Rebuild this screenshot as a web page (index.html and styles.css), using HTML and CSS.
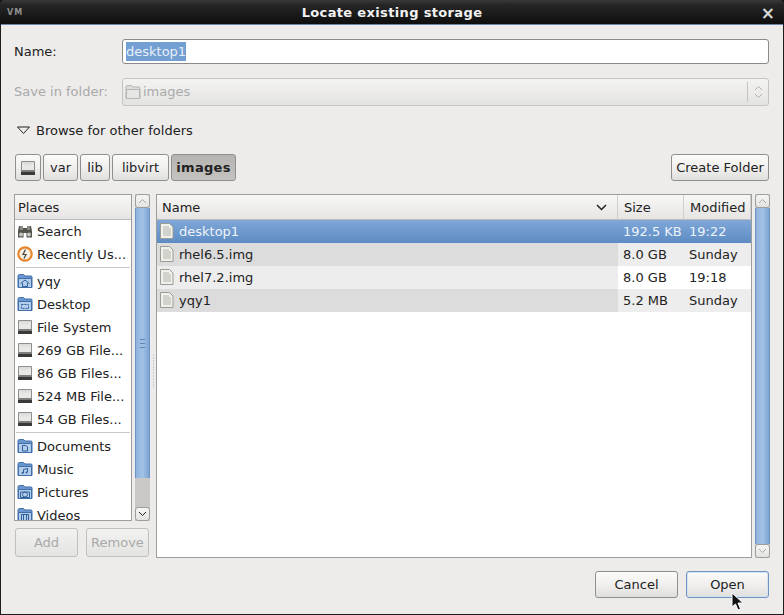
FILE: index.html
```html
<!DOCTYPE html>
<html lang="en">
<head>
    <meta charset="UTF-8">
    <title>Locate existing storage</title>
    <link rel="stylesheet" href="styles.css">
</head>
<body>
    <svg class="defs" width="0" height="0">
        <defs>
            <linearGradient id="drive-face" x1="0" y1="0" x2="0" y2="1">
                <stop offset="0" stop-color="#d8d8d6"/>
                <stop offset="1" stop-color="#f4f4f2"/>
            </linearGradient>
        </defs>
        <symbol id="ico-drive" viewBox="0 0 16 16">
            <path d="M1.500 1.500h13v9h-13z" fill="url(#drive-face)" stroke="#8e8e8c"/>
            <path d="M2 3l6 4.500L14 3v7H2z" fill="#e8e8e6"/>
            <path d="M1 10.500h14v4.500H1z" fill="#3a3a38"/>
            <path d="M1 10.500h14v1.200H1z" fill="#9a9a98"/>
        </symbol>
        <symbol id="ico-folder" viewBox="0 0 16 16">
            <path d="M1 3q0-1.500 1.500-1.500h4L8 3h6q1 0 1 1v10.500H1z" fill="#6a97cf" stroke="#3f6ea8"/>
            <path d="M1.500 5.500h13v9h-13z" fill="#b4cdea" stroke="#3f6ea8"/>
        </symbol>
        <symbol id="ico-file" viewBox="0 0 16 18">
            <path d="M1.500 1.500h9l3.500 3.500v11.500h-12.500z" fill="#f1f1ec" stroke="#9b9b96"/>
            <path d="M4 5h6M4 7h8M4 9h8M4 11h8M4 13h8" stroke="#b4b4ae"/>
        </symbol>
    </svg>

    <div class="window">
        <div class="titlebar">
            <span class="wm-icon">VM</span>
            <span class="title">Locate existing storage</span>
            <span class="close">&#215;</span>
        </div>

        <div class="content">
            <div class="form-row name-row">
                <label class="row-label">Name:</label>
                <div class="entry"><span class="selected-text">desktop1</span></div>
            </div>

            <div class="form-row save-row">
                <label class="row-label disabled">Save in folder:</label>
                <div class="combo">
                    <svg class="combo-folder" width="16" height="16" viewBox="0 0 16 16">
                        <path d="M1 3q0-1.500 1.500-1.500h4L8 3h6q1 0 1 1v10.500H1z" fill="#dcdcda" stroke="#b5b5b3"/>
                        <path d="M1.500 5.500h13v9h-13z" fill="#e6e6e4" stroke="#b5b5b3"/>
                    </svg>
                    <span class="combo-text">images</span>
                    <span class="combo-arrows">
                        <svg width="9" height="14" viewBox="0 0 9 14">
                            <path d="M1 5l3.500-3.500L8 5M1 9l3.500 3.500L8 9" fill="none" stroke="#b0b0ae"/>
                        </svg>
                    </span>
                </div>
            </div>

            <div class="expander">
                <svg width="15" height="9" viewBox="0 0 15 9">
                    <path d="M1.500 1h12L7.500 7.500z" fill="none" stroke="#222"/>
                </svg>
                <span>Browse for other folders</span>
            </div>

            <div class="path-row">
                <div class="path-bar">
                    <button class="btn path-btn icon-btn"><svg width="16" height="16"><use href="#ico-drive"/></svg></button>
                    <button class="btn path-btn var-btn">var</button>
                    <button class="btn path-btn lib-btn">lib</button>
                    <button class="btn path-btn libvirt-btn">libvirt</button>
                    <button class="btn path-btn active">images</button>
                </div>
                <button class="btn create-btn">Create Folder</button>
            </div>

            <div class="browser">
                <div class="places-side">
                    <div class="places-top">
                        <div class="places">
                            <div class="list-header places-header">Places</div>
                            <div class="place">
                                <svg width="16" height="16" viewBox="0 0 16 16">
                                    <path d="M1 8l1-5h4v2h4V3h4l1 5v6.500h-5.500V10h-3v4.500H1z" fill="#55554f"/>
                                    <path d="M3 3h3v4H3zM10 3h3v4h-3z" fill="#8b8b83"/>
                                    <circle cx="4" cy="11.500" r="2" fill="#c5c5bd"/>
                                    <circle cx="12" cy="11.500" r="2" fill="#c5c5bd"/>
                                </svg>
                                <span>Search</span>
                            </div>
                            <div class="place">
                                <svg width="16" height="16" viewBox="0 0 16 16">
                                    <circle cx="8" cy="8" r="6.700" fill="#f6efe2" stroke="#e8842a" stroke-width="2.200"/>
                                    <path d="M8.500 3.500L6 8.500h3L7 12.500" fill="none" stroke="#444" stroke-width="1.200"/>
                                </svg>
                                <span>Recently Us...</span>
                            </div>
                            <div class="sep"></div>
                            <div class="place"><svg width="16" height="16" viewBox="0 0 16 16"><use href="#ico-folder"/><path d="M3.500 10.500L8 7l4.500 3.500M5.500 10v3.500h5V10" fill="none" stroke="#2f5f9c"/></svg><span>yqy</span></div>
                            <div class="place"><svg width="16" height="16" viewBox="0 0 16 16"><use href="#ico-folder"/><path d="M4.500 8.500h7v4h-7z" fill="none" stroke="#2f5f9c" stroke-dasharray="2 1"/></svg><span>Desktop</span></div>
                            <div class="place"><svg width="16" height="16"><use href="#ico-drive"/></svg><span>File System</span></div>
                            <div class="place"><svg width="16" height="16"><use href="#ico-drive"/></svg><span>269 GB File...</span></div>
                            <div class="place"><svg width="16" height="16"><use href="#ico-drive"/></svg><span>86 GB Files...</span></div>
                            <div class="place"><svg width="16" height="16"><use href="#ico-drive"/></svg><span>524 MB File...</span></div>
                            <div class="place"><svg width="16" height="16"><use href="#ico-drive"/></svg><span>54 GB Files...</span></div>
                            <div class="sep"></div>
                            <div class="place"><svg width="16" height="16" viewBox="0 0 16 16"><use href="#ico-folder"/><path d="M5.500 7.500h3.500l1.500 1.500v4h-5z" fill="none" stroke="#2f5f9c"/></svg><span>Documents</span></div>
                            <div class="place"><svg width="16" height="16" viewBox="0 0 16 16"><use href="#ico-folder"/><path d="M6.500 12V8.500l4-1V11" fill="none" stroke="#2f5f9c"/><circle cx="5.500" cy="12" r="1" fill="#2f5f9c"/><circle cx="9.500" cy="11.500" r="1" fill="#2f5f9c"/></svg><span>Music</span></div>
                            <div class="place"><svg width="16" height="16" viewBox="0 0 16 16"><use href="#ico-folder"/><circle cx="8" cy="10.500" r="2.500" fill="none" stroke="#2f5f9c"/><path d="M3.500 8h9v5.500h-9z" fill="none" stroke="#2f5f9c"/></svg><span>Pictures</span></div>
                            <div class="place"><svg width="16" height="16" viewBox="0 0 16 16"><use href="#ico-folder"/><path d="M4.500 7.500h7v6h-7zM6.500 7.500v6M9.500 7.500v6" fill="none" stroke="#2f5f9c"/></svg><span>Videos</span></div>
                        </div>
                        <div class="scrollbar places-scroll">
                            <div class="sb-btn"><svg width="9" height="6" viewBox="0 0 9 6"><path d="M1 5l3.500-3.500L8 5" fill="none" stroke="#aaa"/></svg></div>
                            <div class="sb-thumb"><span class="grip"></span></div>
                            <div class="sb-rest"></div>
                            <div class="sb-btn"><svg width="9" height="6" viewBox="0 0 9 6"><path d="M1 1l3.500 3.500L8 1" fill="none" stroke="#222"/></svg></div>
                        </div>
                    </div>
                    <div class="places-buttons">
                        <button class="btn disabled-btn add-btn">Add</button>
                        <button class="btn disabled-btn remove-btn">Remove</button>
                    </div>
                </div>

                <div class="pane-handle"></div>

                <div class="files-side">
                    <div class="files">
                        <div class="file-row file-header">
                            <div class="list-header col-name">
                                <span>Name</span>
                                <svg width="11" height="7" viewBox="0 0 11 7"><path d="M1 1l4.500 4.500L10 1" fill="none" stroke="#222" stroke-width="1.500"/></svg>
                            </div>
                            <div class="list-header col-size">Size</div>
                            <div class="list-header col-mod">Modified</div>
                        </div>
                        <div class="file-row selected">
                            <div class="cell col-name"><svg width="16" height="18"><use href="#ico-file"/></svg><span>desktop1</span></div>
                            <div class="cell col-size">192.5 KB</div>
                            <div class="cell col-mod">19:22</div>
                        </div>
                        <div class="file-row odd">
                            <div class="cell col-name"><svg width="16" height="18"><use href="#ico-file"/></svg><span>rhel6.5.img</span></div>
                            <div class="cell col-size">8.0 GB</div>
                            <div class="cell col-mod">Sunday</div>
                        </div>
                        <div class="file-row even">
                            <div class="cell col-name"><svg width="16" height="18"><use href="#ico-file"/></svg><span>rhel7.2.img</span></div>
                            <div class="cell col-size">8.0 GB</div>
                            <div class="cell col-mod">19:18</div>
                        </div>
                        <div class="file-row odd">
                            <div class="cell col-name"><svg width="16" height="18"><use href="#ico-file"/></svg><span>yqy1</span></div>
                            <div class="cell col-size">5.2 MB</div>
                            <div class="cell col-mod">Sunday</div>
                        </div>
                    </div>
                    <div class="scrollbar files-scroll">
                        <div class="sb-btn"><svg width="9" height="6" viewBox="0 0 9 6"><path d="M1 5l3.500-3.500L8 5" fill="none" stroke="#aaa"/></svg></div>
                        <div class="sb-thumb"></div>
                        <div class="sb-btn"><svg width="9" height="6" viewBox="0 0 9 6"><path d="M1 1l3.500 3.500L8 1" fill="none" stroke="#aaa"/></svg></div>
                    </div>
                </div>
            </div>

            <div class="actions">
                <button class="btn action-btn">Cancel</button>
                <button class="btn action-btn default-btn">Open</button>
            </div>
        </div>

        <svg class="cursor" width="14" height="19" viewBox="0 0 14 19">
            <path d="M1 1v14l3.500-3 2.500 6 2.500-1-2.500-6h5z" fill="#111" stroke="#fff"/>
        </svg>
    </div>
</body>
</html>
```

FILE: styles.css
```css
/* General Styles */
html, body {
    margin: 0;
    padding: 0;
    width: 784px;
    height: 615px;
    overflow: hidden;
    background: #1a1a1a;
}

body {
    font-family: "DejaVu Sans", sans-serif;
    font-size: 13px;
    color: #222;
}

.defs {
    position: absolute;
}

svg {
    display: block;
    flex: none;
}

/* Window frame */
.window {
    position: relative;
    height: 615px;
    display: flex;
    flex-direction: column;
    box-sizing: border-box;
    padding: 0 1px 1px 1px;
    background: #1c1c1c;
    border-radius: 5px 5px 0 0;
}

.titlebar {
    height: 24px;
    flex: none;
    position: relative;
    display: flex;
    align-items: center;
    justify-content: center;
    margin: 0 -1px;
    background: linear-gradient(#3a3a3a, #262626 20%, #0e0e0e);
    border-radius: 5px 5px 0 0;
    color: #f2f2f2;
}

.title {
    font-weight: bold;
    font-size: 13px;
    letter-spacing: 0.35px;
}

.wm-icon {
    position: absolute;
    left: 7px;
    top: 9px;
    font-size: 8px;
    font-weight: bold;
    line-height: 8px;
    letter-spacing: 1px;
    color: #8f8f8f;
}

.close {
    position: absolute;
    right: 9px;
    top: 0;
    font-size: 17px;
    line-height: 27px;
    font-weight: bold;
    color: #d8d8d8;
}

.content {
    flex: 1;
    min-height: 0;
    display: flex;
    flex-direction: column;
    box-sizing: border-box;
    padding: 14px 14px 0 13px;
    background: #edeceb;
    border-top: 1px solid #6b86a8;
}

/* Form rows */
.form-row {
    display: flex;
    align-items: center;
}

.row-label {
    width: 108px;
    flex: none;
    line-height: 15px;
}

.row-label.disabled {
    color: #a9a9a9;
    padding-bottom: 1px;
}

.name-row {
    height: 25px;
}

.entry {
    flex: 1;
    height: 25px;
    box-sizing: border-box;
    padding: 2px 3px;
    background: #fff;
    border: 1px solid #8a8a88;
    border-radius: 3px;
    line-height: 19px;
}

.selected-text {
    display: inline-block;
    background: #739fd3;
    color: #e9f0f9;
}

.save-row {
    height: 28px;
    margin-top: 14px;
}

.combo {
    flex: 1;
    height: 28px;
    box-sizing: border-box;
    display: flex;
    align-items: center;
    gap: 2px;
    padding-left: 2px;
    border: 1px solid #c4c4c2;
    border-radius: 3px;
    background: linear-gradient(#f3f3f2, #ecebea 50%, #e3e3e1);
    color: #a9a9a9;
}

.combo-text {
    flex: 1;
    line-height: 15px;
    padding-bottom: 1px;
}

.combo-arrows {
    height: 20px;
    width: 21px;
    box-sizing: border-box;
    border-left: 1px solid #c4c4c2;
    display: flex;
    align-items: center;
    justify-content: center;
}

.expander {
    display: flex;
    align-items: center;
    gap: 5px;
    height: 20px;
    margin-top: 14px;
    padding-left: 2px;
}

/* Buttons */
.btn {
    font-family: inherit;
    font-size: 13px;
    color: #222;
    margin: 0;
    padding: 0;
    box-sizing: border-box;
    border: 1px solid #8f8f8d;
    border-radius: 3px;
    background: linear-gradient(#fbfbfa, #efeeed 55%, #dfdfdd);
    text-align: center;
}

.path-row {
    display: flex;
    justify-content: space-between;
    margin-top: 14px;
}

.path-bar {
    display: flex;
    gap: 2px;
    margin-left: 1px;
}

.path-btn {
    height: 27px;
}

.icon-btn {
    width: 26px;
    display: flex;
    align-items: center;
    justify-content: center;
}

.var-btn {
    width: 35px;
}

.lib-btn {
    width: 30px;
}

.libvirt-btn {
    width: 57px;
}

.path-btn.active {
    width: 65px;
    font-weight: bold;
    letter-spacing: 0.3px;
    background: linear-gradient(#b5b4b0, #c4c3bf);
}

.create-btn {
    width: 98px;
    height: 27px;
}

/* Browser panes */
.browser {
    height: 364px;
    display: flex;
    margin-top: 13px;
    margin-right: -1px;
}

.places-side {
    width: 136px;
    flex: none;
    display: flex;
    flex-direction: column;
}

.places-top {
    height: 327px;
    display: flex;
    gap: 3px;
}

.places {
    width: 118px;
    flex: none;
    box-sizing: border-box;
    border: 1px solid #9d9d9b;
    background: #fff;
    overflow: hidden;
}

.list-header {
    height: 24px;
    box-sizing: border-box;
    display: flex;
    align-items: center;
    padding-left: 3px;
    background: linear-gradient(#f7f7f6, #e6e5e3);
    border-bottom: 1px solid #bbb;
}

.places-header {
    height: 25px;
}

.place {
    height: 23px;
    display: flex;
    align-items: center;
    gap: 4px;
    padding-left: 2px;
    padding-bottom: 1px;
    box-sizing: border-box;
    white-space: nowrap;
}

.sep {
    height: 3px;
    margin: 1px 1px 0 1px;
    box-sizing: border-box;
    border-top: 1px solid #c8c8c6;
}

.places-buttons {
    display: flex;
    gap: 8px;
    margin-top: 7px;
    margin-left: 1px;
}

.disabled-btn {
    height: 29px;
    color: #a9a9a9;
    border-color: #c0c0be;
    background: linear-gradient(#f1f1f0, #e4e4e2);
}

.add-btn {
    width: 63px;
}

.remove-btn {
    width: 63px;
}

/* Scrollbars */
.scrollbar {
    width: 15px;
    flex: none;
    display: flex;
    flex-direction: column;
    background: #c9c8c6;
}

.sb-btn {
    height: 14px;
    flex: none;
    box-sizing: border-box;
    display: flex;
    align-items: center;
    justify-content: center;
    background: linear-gradient(#f6f6f5, #e2e2e0);
    border: 1px solid #9d9d9b;
    border-radius: 3px;
}

.sb-thumb {
    flex: 1;
    display: flex;
    align-items: center;
    justify-content: center;
    background: linear-gradient(90deg, #8fb3de, #a3c1e5 50%, #7ea5d4);
    border-left: 1px solid #6c93c4;
    border-right: 1px solid #6c93c4;
}

.grip {
    width: 5px;
    height: 7px;
    border-top: 1px solid #5e86b8;
    border-bottom: 1px solid #5e86b8;
    background: linear-gradient(#5e86b8, #5e86b8) center / 5px 1px no-repeat;
}

.places-scroll .sb-thumb {
    flex: none;
    height: 270px;
}

.sb-rest {
    flex: 1;
}

.pane-handle {
    width: 6px;
    flex: none;
    background: radial-gradient(circle, #aaa 0.6px, transparent 1px) center / 3px 3px repeat-y;
    clip-path: inset(160px 0 170px 0);
}

.files-side {
    flex: 1;
    min-width: 0;
    display: flex;
    gap: 3px;
}

.files {
    flex: 1;
    box-sizing: border-box;
    border: 1px solid #9d9d9b;
    background: #fff;
}

.file-row {
    display: grid;
    grid-template-columns: 461px 66px 1fr;
    height: 23px;
}

.file-header {
    height: 25px;
}

.file-header .list-header {
    height: 25px;
    padding-left: 6px;
    border-right: 1px solid #cfcfcd;
}

.file-header .col-name {
    justify-content: space-between;
    padding-left: 5px;
    padding-right: 10px;
}

.cell {
    display: flex;
    align-items: center;
    white-space: nowrap;
    padding-left: 5px;
    padding-bottom: 1px;
    box-sizing: border-box;
}

.cell.col-name {
    gap: 4px;
    padding-left: 2px;
}

.selected {
    background: linear-gradient(#7fa7d8, #5d8cc3);
    color: #eef3fa;
}

.odd .col-name {
    background: #dcdcdc;
}

.odd .col-size,
.odd .col-mod {
    background: #ededed;
}

.even .col-name {
    background: #ededed;
}

.even .col-size,
.even .col-mod {
    background: #fff;
}

/* Bottom buttons */
.actions {
    display: flex;
    justify-content: flex-end;
    gap: 8px;
    margin-top: 13px;
}

.action-btn {
    width: 83px;
    height: 27px;
}

.default-btn {
    border-color: #6f94c2;
    box-shadow: inset 0 0 0 1px #d5e2f1;
}

.cursor {
    position: absolute;
    left: 731px;
    top: 592px;
}
```
